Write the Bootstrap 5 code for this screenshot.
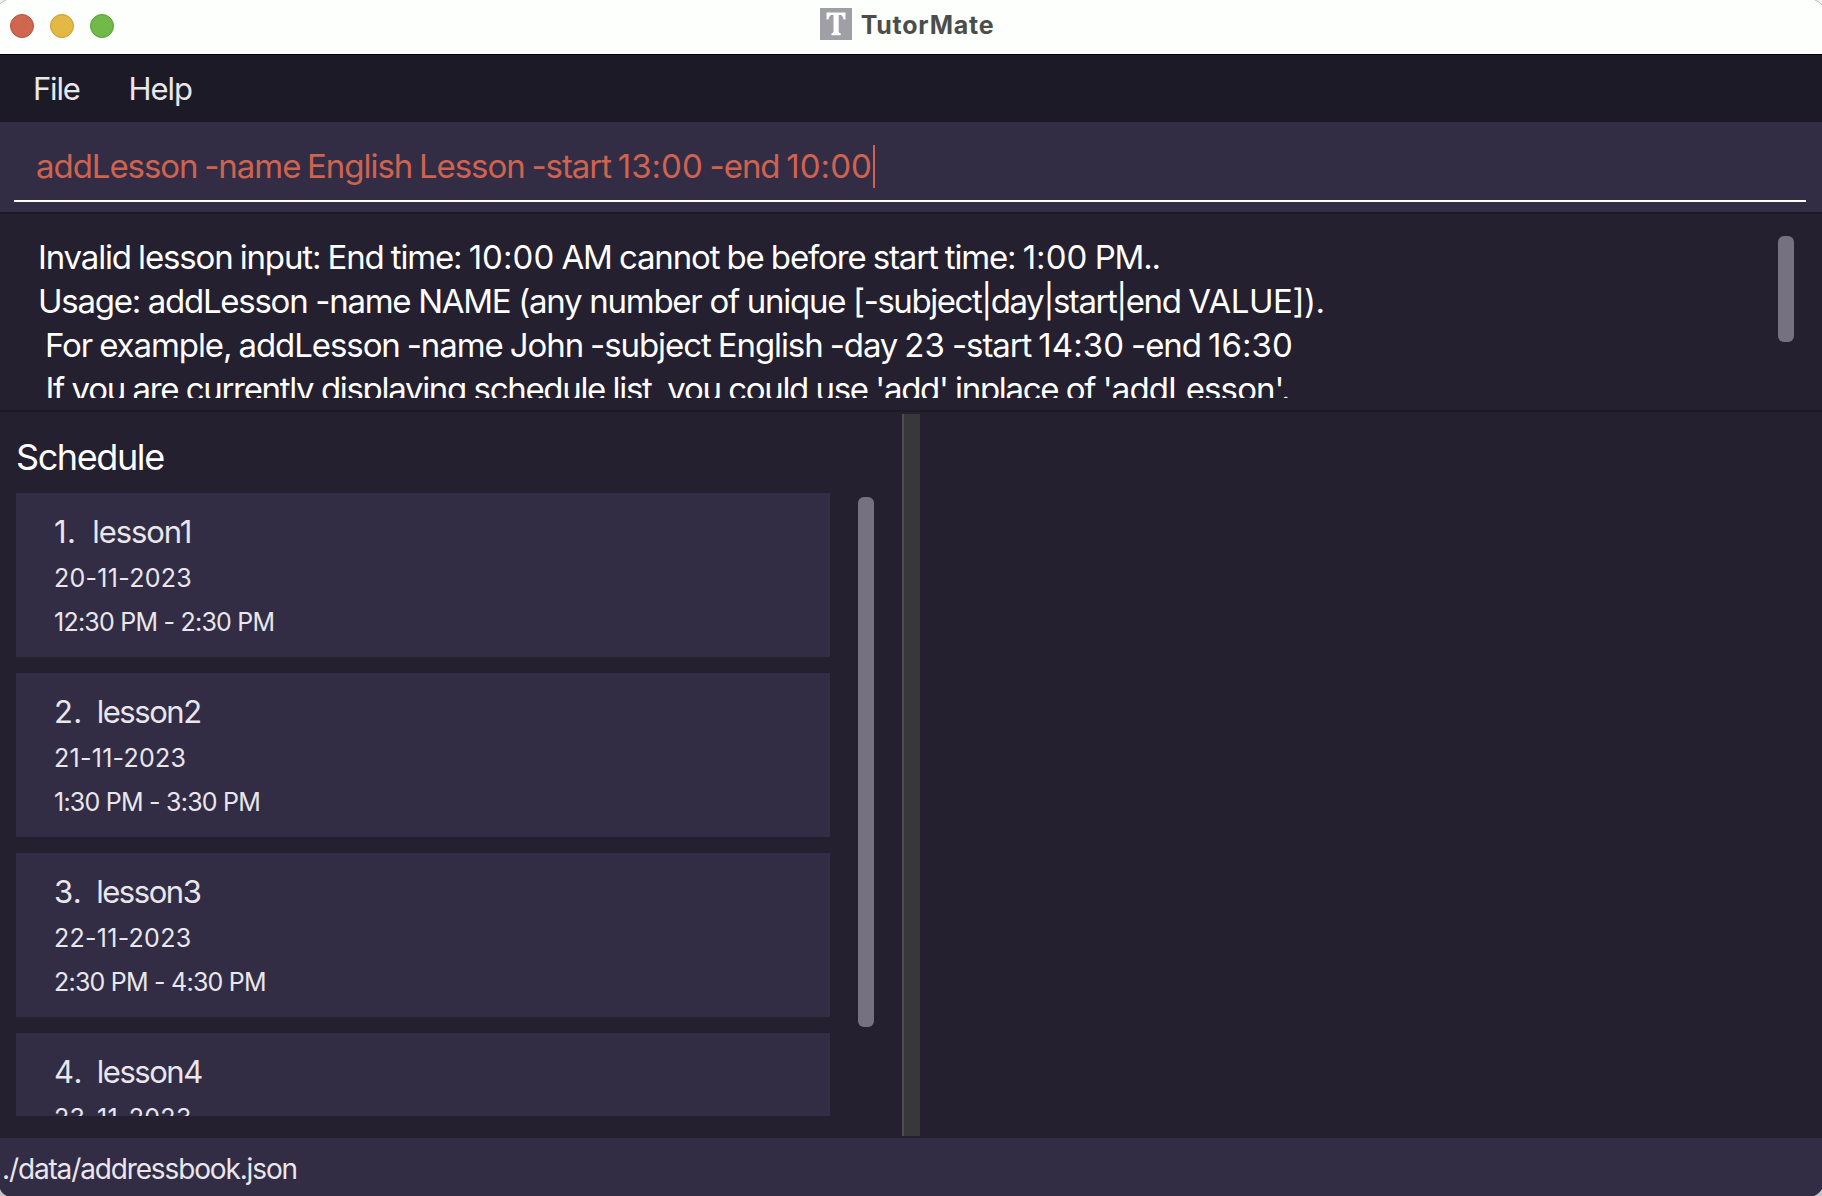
<!DOCTYPE html>
<html lang="en">
<head>
<meta charset="utf-8">
<title>TutorMate</title>
<link rel="stylesheet" href="https://cdn.jsdelivr.net/npm/bootstrap@5.3.0/dist/css/bootstrap.min.css">
<style>
  body { font-family: Inter, "Liberation Sans", sans-serif; background: #242030; color: #e9e7ec; }
  .app-window { width: 1822px; height: 1196px; background: #242030; }
  .title-bar { height: 55px; background: #fcfffb; border-bottom: 1px solid #000; padding: 0 8px 4px 0; }
  .lights { gap: 16px; left: 10px; top: 14px; }
  .light { width: 24px; height: 24px; }
  .light-close { background: #cf6750; border: 1px solid #bd503b; }
  .light-min { background: #e3b844; border: 1px solid #c79c33; }
  .light-max { background: #71ba49; border: 1px solid #559f35; }
  .app-logo { margin-top: 8px; }
  .app-title { font-size: 25px; line-height: 50px; font-weight: 700; letter-spacing: .75px; color: #4c4d4b; }
  .title-inner { gap: 9px; }
  .menu-bar { height: 67px; background: #1d1a27; padding-left: 33px; font-size: 31px; gap: 49px; }
  .menu-bar .nav-link { color: #e9e7ec; line-height: 67px; letter-spacing: -1.1px; }
  .menu-bar .menu-file { letter-spacing: -1.2px; }
  .command-pane { height: 92px; background: #322d45; border-bottom: 2px solid #1d1a27; padding: 10px 16px 0 14px; }
  .command-field { height: 70px; border-bottom: 2px solid #fff; color: #d0634f; font-size: 33px; letter-spacing: -1.05px; word-spacing: -1.5px; padding: 1px 0 0 22px; white-space: pre; }
  .caret { width: 2px; height: 43px; background: #d0634f; margin-left: 1px; }
  .result-pane { height: 198px; border-bottom: 2px solid #1d1a27; padding: 21px 28px 12px 38px; }
  .result-text { height: 163px; overflow: hidden; color: #fff; font-size: 33px; line-height: 44px; white-space: pre; }
  .ls-a { letter-spacing: -1.16px; word-spacing: -.9px; }
  .ls-b { letter-spacing: -1.267px; word-spacing: -.1px; }
  .ls-c { letter-spacing: -1.075px; word-spacing: -1.2px; }
  .ls-d { letter-spacing: -1.31px; word-spacing: -.4px; }
  .digits { letter-spacing: .05px; }
  .ls-tight { letter-spacing: -1.45px; }
  .ls-wide { letter-spacing: -.45px; }
  .ls-mid { letter-spacing: -.9px; }
  .thumb { width: 16px; border-radius: 6px; background: #757180; }
  .thumb-result { height: 106px; margin-top: 1px; }
  .main-area { height: 726px; padding: 2px 0; }
  .list-side { width: 902px; padding-left: 16px; }
  .list-heading { font-size: 36px; line-height: 44px; letter-spacing: -1.4px; color: #fff; padding-top: 21px; margin-bottom: 14px; }
  .lesson-list { width: 814px; height: 623px; overflow: hidden; gap: 16px; }
  .lesson { height: 164px; flex: none; background: #322d45; padding: 16px 0 0 38px; }
  .lesson-name { font-size: 31px; line-height: 46px; margin-bottom: 1px; letter-spacing: -1.45px; gap: 14px; }
  .lesson:first-child .lesson-name { letter-spacing: -1.1px; gap: 16px; }
  .lesson-index { letter-spacing: .4px; }
  .lesson-date, .lesson-time { font-size: 25px; line-height: 44px; }
  .lesson-date { letter-spacing: .27px; }
  .lesson-time { letter-spacing: -.77px; }
  .thumb-list { height: 530px; margin: 4px 0 0 28px; }
  .divider { width: 18px; background: #383838; border-left: 2px solid #4d4d4d; }
  .status-bar { height: 58px; background: #322d45; font-size: 28px; line-height: 63px; letter-spacing: -1.14px; padding-left: 2px; }
  .corner { width: 10px; height: 10px; }
</style>
</head>
<body class="m-0 overflow-hidden">
<div class="app-window position-relative d-flex flex-column overflow-hidden">
  <header class="title-bar position-relative d-flex justify-content-center flex-shrink-0">
    <div class="lights position-absolute d-flex">
      <span class="light light-close rounded-circle"></span>
      <span class="light light-min rounded-circle"></span>
      <span class="light light-max rounded-circle"></span>
    </div>
    <div class="title-inner d-flex">
      <svg class="app-logo" width="32" height="32" viewBox="0 0 32 32"><rect width="32" height="32" fill="#a09fa5"/><path d="M6.500 4.500H25.500V11.500H23.500Q22.800 7 20.500 7H18.700V23.500Q18.700 25 20.700 25.200V27.300H11.500V25.200Q13.500 25 13.500 23.500V7H11.700Q9.200 7 8.500 11.500H6.500Z" fill="#fcfffb"/></svg>
      <span class="app-title">TutorMate</span>
    </div>
  </header>
  <nav class="menu-bar d-flex flex-shrink-0">
    <a class="nav-link p-0 menu-file" href="#">File</a>
    <a class="nav-link p-0" href="#">Help</a>
  </nav>
  <section class="command-pane flex-shrink-0">
    <div class="command-field d-flex align-items-center"><span>addLesson -name English Lesson -start <span class="digits">13:00</span> -end <span class="digits">10:00</span></span><span class="caret"></span></div>
  </section>
  <section class="result-pane d-flex justify-content-between flex-shrink-0">
    <div class="result-text"><div class="ls-a">Invalid lesson input: End time: <span class="digits">10:00</span> AM cannot be before start time: <span class="digits">1:00</span> PM..</div><div class="ls-b">Usage: addLesson -name NAME (any number of unique <span class="ls-tight">[-subject|day|start|end</span> <span class="ls-wide">VALUE]).</span></div><div class="ls-c"> For example, addLesson -name John -subject English -day <span class="digits">23</span> -start <span class="digits">14:30</span> -end <span class="digits">16:30</span></div><div class="ls-d"> If you are currently displaying schedule list, you could use 'add' inplace of <span class="ls-mid">'addLesson'.</span></div></div>
    <div class="thumb thumb-result"></div>
  </section>
  <main class="main-area d-flex flex-shrink-0">
    <section class="list-side">
      <div class="list-heading">Schedule</div>
      <div class="d-flex">
        <div class="lesson-list d-flex flex-column">
          <article class="lesson"><div class="lesson-name d-flex"><span class="lesson-index">1.</span><span>lesson1</span></div><div class="lesson-date">20-11-2023</div><div class="lesson-time">12:30 PM - 2:30 PM</div></article>
          <article class="lesson"><div class="lesson-name d-flex"><span class="lesson-index">2.</span><span>lesson2</span></div><div class="lesson-date">21-11-2023</div><div class="lesson-time">1:30 PM - 3:30 PM</div></article>
          <article class="lesson"><div class="lesson-name d-flex"><span class="lesson-index">3.</span><span>lesson3</span></div><div class="lesson-date">22-11-2023</div><div class="lesson-time">2:30 PM - 4:30 PM</div></article>
          <article class="lesson"><div class="lesson-name d-flex"><span class="lesson-index">4.</span><span>lesson4</span></div><div class="lesson-date">23-11-2023</div></article>
        </div>
        <div class="thumb thumb-list"></div>
      </div>
    </section>
    <div class="divider"></div>
    <section class="flex-grow-1"></section>
  </main>
  <footer class="status-bar flex-shrink-0">./data/addressbook.json</footer>
  <svg class="corner position-absolute top-0 start-0" viewBox="0 0 10 10"><path d="M0 0H5L0 4Z" fill="#f2f2f2"/><path d="M0 4Q2 1.500 6 0" fill="none" stroke="#b9b9b9"/></svg>
  <svg class="corner position-absolute top-0 end-0" viewBox="0 0 10 10"><path d="M10 0H5L10 4Z" fill="#f2f2f2"/><path d="M10 5Q8 2 3 0" fill="none" stroke="#b9b9b9"/></svg>
  <svg class="corner position-absolute bottom-0 start-0" viewBox="0 0 10 10"><path d="M0 3Q2 8 7 10H0Z" fill="#c4c4c2"/></svg>
  <svg class="corner position-absolute bottom-0 end-0" viewBox="0 0 10 10"><path d="M10 3Q7 8 2 10H10Z" fill="#c4c4c2"/></svg>
</div>
<script src="https://cdn.jsdelivr.net/npm/bootstrap@5.3.0/dist/js/bootstrap.bundle.min.js"></script>
</body>
</html>
